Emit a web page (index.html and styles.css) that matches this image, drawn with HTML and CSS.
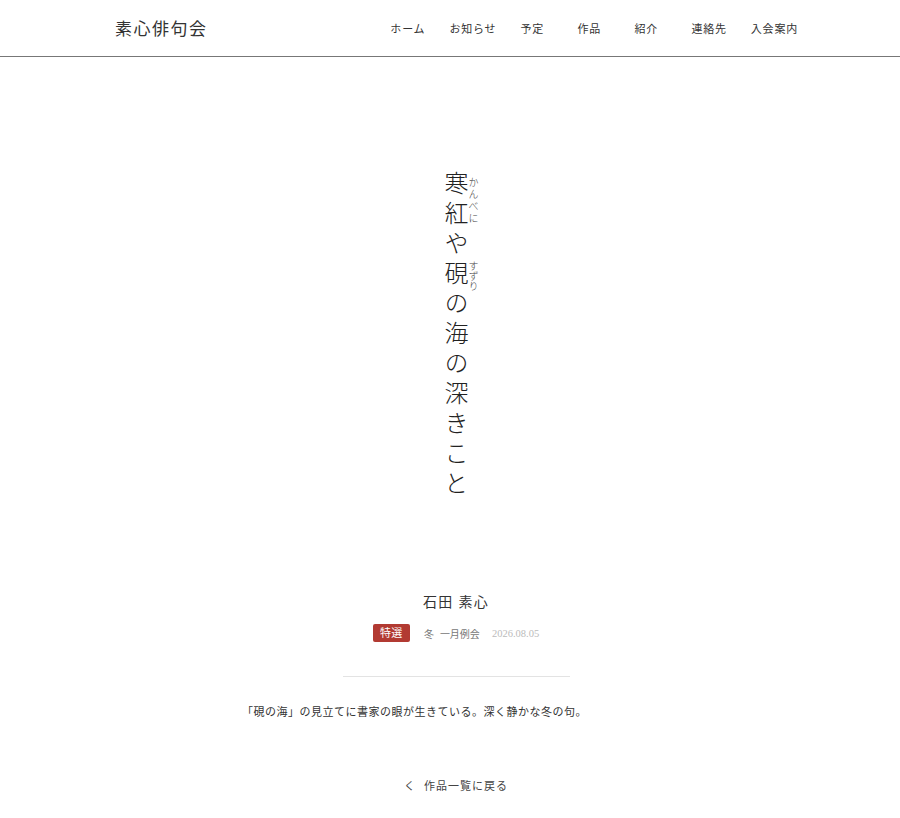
FILE: index.html
```html
<!DOCTYPE html>
<html lang="ja">
<head>
<meta charset="utf-8">
<title>寒紅や硯の海の深きこと｜素心俳句会</title>
<link rel="stylesheet" href="styles.css">
</head>
<body>
<header class="site-header">
  <div class="header-inner">
    <a class="logo" href="#">素心俳句会</a>
    <nav class="nav">
      <a href="#">ホーム</a>
      <a href="#">お知らせ</a>
      <a href="#">予定</a>
      <a href="#">作品</a>
      <a href="#">紹介</a>
      <a href="#">連絡先</a>
      <a href="#">入会案内</a>
    </nav>
  </div>
</header>
<main class="work">
  <div class="haiku-col">
    <p class="haiku"><ruby><span class="c">寒</span><span class="c">紅</span><rt>かんべに</rt></ruby><span class="c">や</span><ruby><span class="c">硯</span><rt class="short">すずり</rt></ruby><span class="c">の</span><span class="c">海</span><span class="c">の</span><span class="c">深</span><span class="c">き</span><span class="c">こ</span><span class="c">と</span></p>
  </div>
  <p class="author">石田 素心</p>
  <div class="meta">
    <span class="badge">特選</span>
    <span class="term"><span>冬</span><span>一月例会</span></span>
    <span class="date">2026.08.05</span>
  </div>
  <hr class="divider">
  <p class="comment">「硯の海」の見立てに書家の眼が生きている。深く静かな冬の句。</p>
  <a class="back" href="#"><span class="chev">く</span>作品一覧に戻る</a>
</main>
</body>
</html>
```

FILE: styles.css
```css
html, body {
  margin: 0;
  padding: 0;
  background: #fff;
}
body {
  font-family: "Liberation Serif", "Noto Sans CJK JP", serif;
  color: #333;
}
a {
  color: inherit;
  text-decoration: none;
}
.site-header {
  border-bottom: 1px solid #777;
}
.header-inner {
  height: 56px;
  display: flex;
  align-items: center;
  justify-content: space-between;
  padding: 0 102px 0 115px;
}
.logo {
  font-size: 17px;
  letter-spacing: 1.5px;
  color: #333;
  line-height: 1;
  margin-top: 2px;
}
.nav {
  display: flex;
  gap: 24px;
}
.nav a {
  font-size: 11px;
  letter-spacing: 0.8px;
  min-width: 33px;
  color: #333;
}
.work {
  display: flex;
  flex-direction: column;
  align-items: center;
  padding-left: 12px;
}
.haiku-col {
  margin-top: 114px;
  width: 60px;
  height: 330px;
  display: flex;
  justify-content: flex-start;
  padding-left: 18px;
  box-sizing: border-box;
}
.haiku {
  margin: 0;
  writing-mode: vertical-rl;
  font-family: "Noto Sans CJK JP", sans-serif;
  font-weight: 300;
  font-size: 24px;
  line-height: 24px;
  color: #222;
  white-space: nowrap;
}
.haiku .c {
  margin-inline-end: 6px;
}
.haiku ruby {
  ruby-align: center;
}
.haiku rt {
  font-size: 10px;
  letter-spacing: 2px;
  color: #444;
  line-height: 1;
  ruby-align: center;
}
.haiku rt.short {
  letter-spacing: 0;
}
.author {
  margin: 91px 0 0;
  font-size: 14px;
  line-height: 22px;
  letter-spacing: 1.3px;
  color: #333;
}
.meta {
  display: flex;
  align-items: center;
  gap: 12px;
  margin-top: 10px;
  font-size: 10px;
  color: #777;
}
.badge {
  background: #b23a32;
  color: #fff;
  height: 18px;
  line-height: 18px;
  padding: 0 7px;
  border-radius: 2px;
  letter-spacing: 0.5px;
  margin-right: 2px;
  font-size: 11px;
}
.term {
  display: flex;
  gap: 6px;
}
.date {
  color: #bbb;
  font-size: 10.5px;
}
.divider {
  width: 227px;
  border: 0;
  border-top: 1px solid #e3e3e3;
  margin: 34px 0 0;
}
.comment {
  width: 428px;
  margin: 27px 0 0;
  font-size: 11px;
  line-height: 17px;
  letter-spacing: 0.5px;
  color: #333;
}
.back {
  margin-top: 56px;
  font-size: 11px;
  line-height: 18px;
  letter-spacing: 1px;
  color: #444;
}
.chev {
  margin-right: 8px;
}
```
